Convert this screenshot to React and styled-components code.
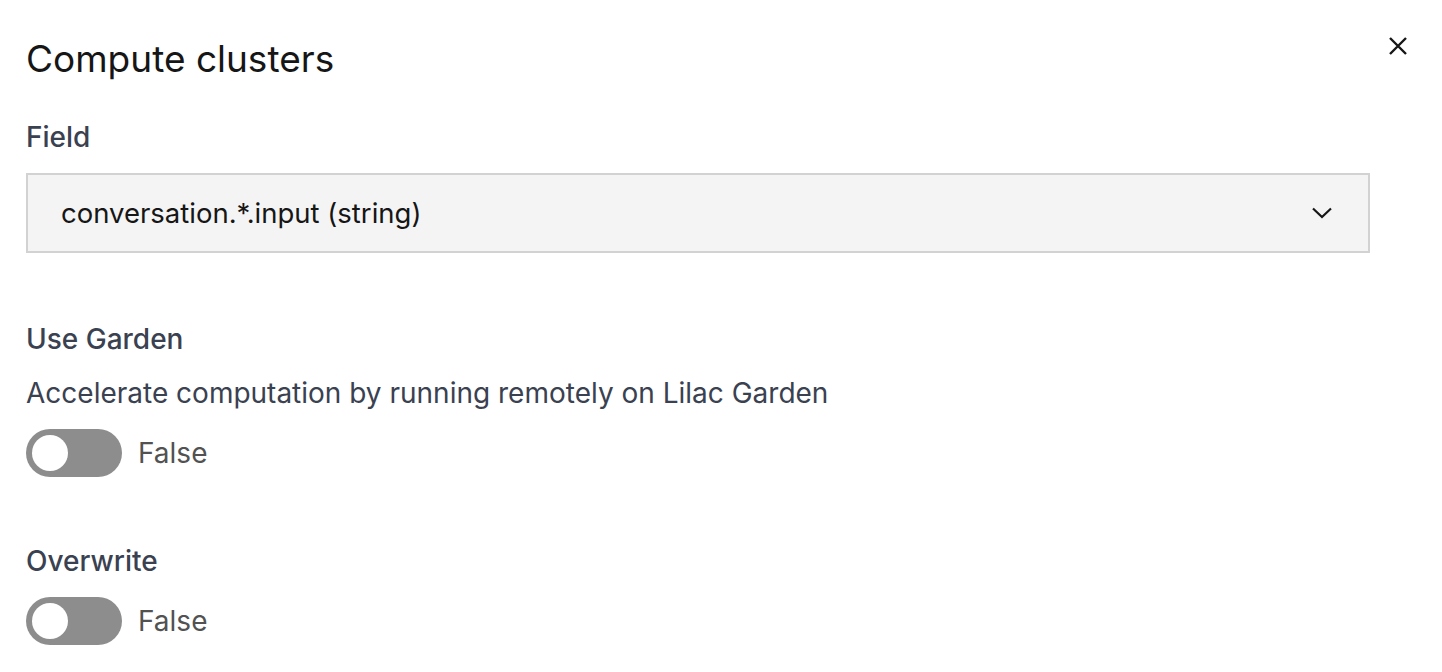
import React from "react";
import styled, { createGlobalStyle } from "styled-components";

const Global = createGlobalStyle`
  html, body { margin: 0; padding: 0; background: #ffffff; }
  body { font-family: Inter, "Noto Sans", sans-serif; -webkit-font-smoothing: antialiased; }
  * { box-sizing: border-box; }
`;

const Modal = styled.div`
  width: 1442px;
  min-height: 672px;
  background: #ffffff;
  display: flex;
  flex-direction: column;
`;

const Header = styled.header`
  display: flex;
  align-items: flex-start;
  justify-content: space-between;
  padding: 35px 20px 0 26px;
`;

const Title = styled.h2`
  margin: 0;
  font-size: 37px;
  line-height: 48px;
  font-weight: 400;
  color: #161616;
`;

const CloseButton = styled.button`
  width: 48px;
  height: 48px;
  margin-top: -13px;
  border: none;
  background: transparent;
  padding: 0;
  display: flex;
  align-items: center;
  justify-content: center;
  cursor: pointer;
  color: #161616;
`;

const Body = styled.div`
  display: flex;
  flex-direction: column;
  padding: 36px 72px 0 26px;
`;

const Section = styled.section`
  display: flex;
  flex-direction: column;
  margin-top: ${(p) => p.$gap || 0}px;
`;

const Label = styled.div`
  font-size: 28px;
  line-height: 36px;
  font-weight: 500;
  color: #3a4150;
  margin-bottom: ${(p) => p.$mb || 18}px;
`;

const Description = styled.div`
  font-size: 28px;
  line-height: 40px;
  color: #3a4150;
  letter-spacing: 0;
  margin-bottom: 16px;
`;

const Select = styled.div`
  height: 80px;
  background: #f4f4f4;
  border: 2px solid #d2d2d2;
  display: flex;
  align-items: center;
  justify-content: space-between;
  padding: 0 36px 0 33px;
  font-size: 27.5px;
  color: #161616;
`;

const ToggleRow = styled.div`
  display: flex;
  align-items: center;
  gap: 16px;
`;

const Track = styled.div`
  width: 96px;
  height: 48px;
  border-radius: 24px;
  background: #8d8d8d;
  display: flex;
  align-items: center;
  padding: 0 6px;
  flex-shrink: 0;
`;

const Knob = styled.div`
  width: 36px;
  height: 36px;
  border-radius: 50%;
  background: #ffffff;
`;

const ToggleText = styled.span`
  font-size: 28px;
  color: #525252;
`;

const Toggle = ({ label }) => (
  <ToggleRow>
    <Track>
      <Knob />
    </Track>
    <ToggleText>{label}</ToggleText>
  </ToggleRow>
);

export default function App() {
  return (
    <>
      <Global />
      <Modal>
        <Header>
          <Title>Compute clusters</Title>
          <CloseButton aria-label="Close">
            <svg width="20" height="20" viewBox="0 0 20 20" fill="none" stroke="currentColor" strokeWidth="2.4">
              <path d="M2 2L18 18M18 2L2 18" />
            </svg>
          </CloseButton>
        </Header>
        <Body>
          <Section>
            <Label>Field</Label>
            <Select>
              <span>conversation.*.input (string)</span>
              <svg width="20" height="12" viewBox="0 0 20 12" fill="none" stroke="#161616" strokeWidth="2.2">
                <path d="M1 1.5L10 10L19 1.5" />
              </svg>
            </Select>
          </Section>
          <Section $gap={68}>
            <Label $mb={16}>Use Garden</Label>
            <Description>Accelerate computation by running remotely on Lilac Garden</Description>
            <Toggle label="False" />
          </Section>
          <Section $gap={66}>
            <Label>Overwrite</Label>
            <Toggle label="False" />
          </Section>
        </Body>
      </Modal>
    </>
  );
}
